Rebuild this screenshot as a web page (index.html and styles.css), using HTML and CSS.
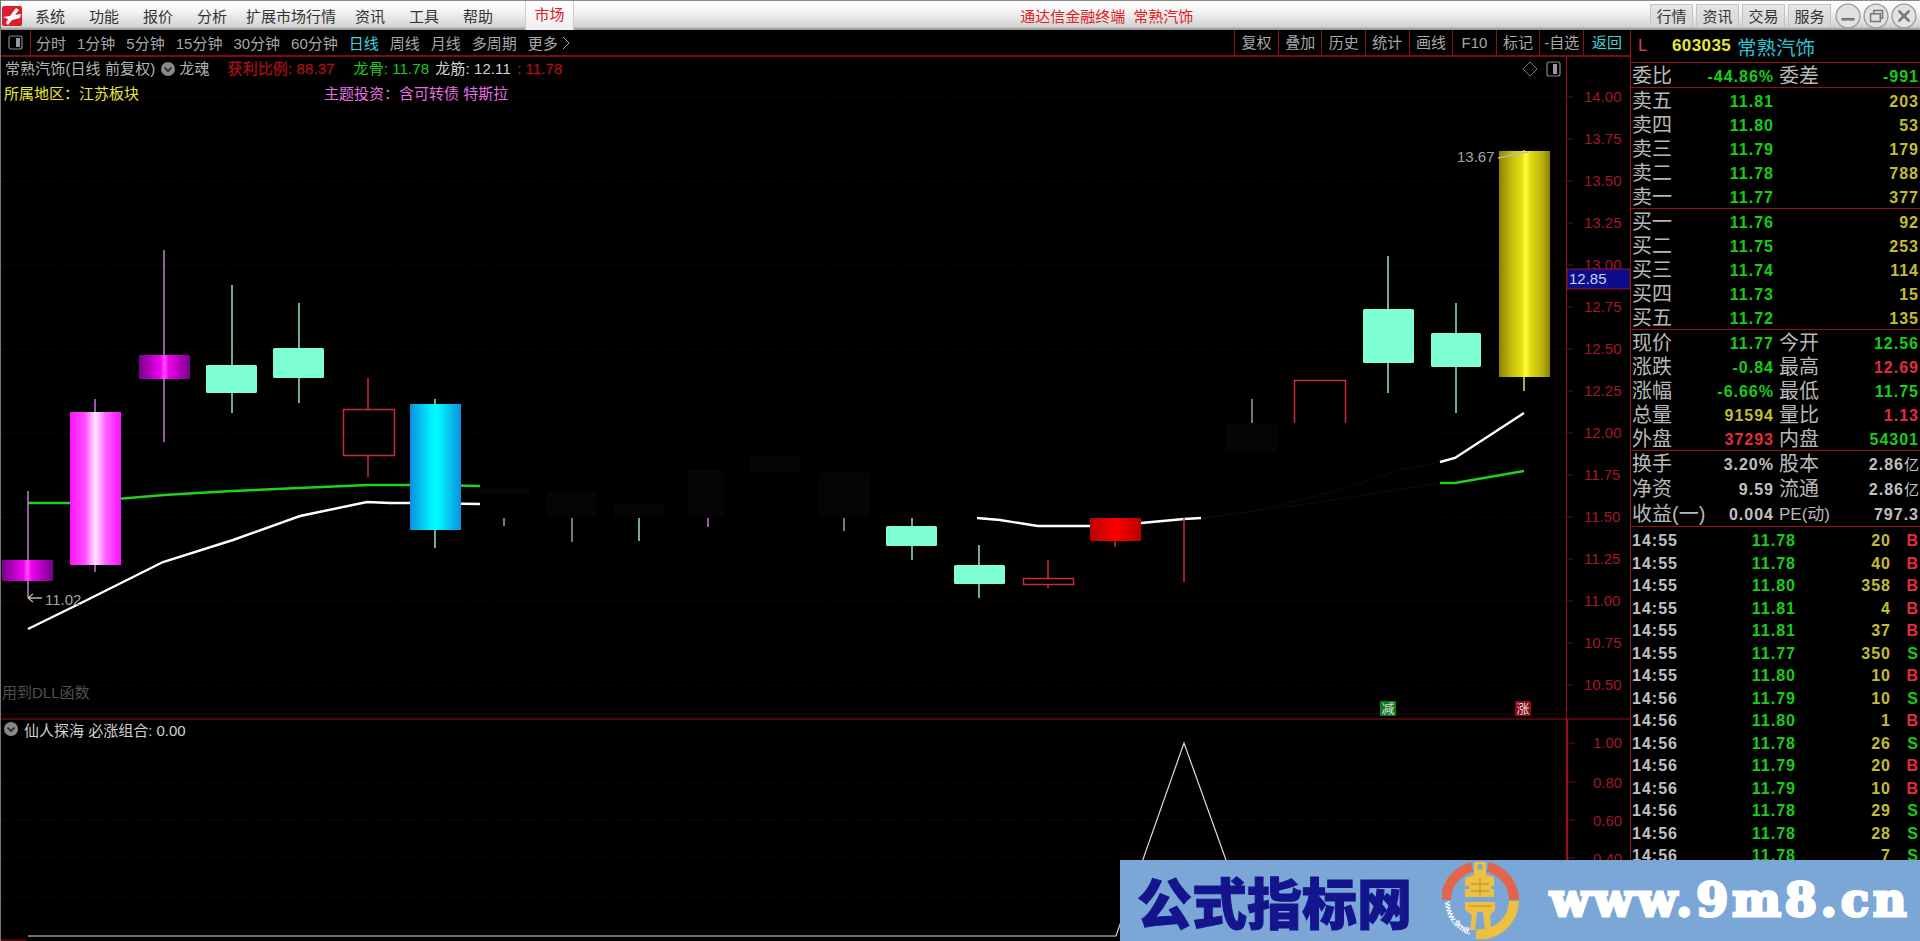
FILE: index.html
```html
<!DOCTYPE html>
<html lang="zh">
<head>
<meta charset="utf-8">
<title>通达信金融终端 常熟汽饰</title>
<link rel="stylesheet" href="styles.css">
</head>
<body>
<div class="app">
  <header class="titlebar">
    <svg class="app-logo" viewBox="0 0 20 20"><rect width="20" height="20" rx="2" fill="#d8202a"/><path d="M1 11 L8 10 L14 2 L17 4 L13 9 L19 8 L18 12 L10 14 L6 19 L4 17 L6 13 Z" fill="#fff"/></svg>
    <nav class="menu">
      <span>系统</span><span>功能</span><span>报价</span><span>分析</span><span class="menu-wide">扩展市场行情</span><span>资讯</span><span>工具</span><span>帮助</span>
    </nav>
    <span class="market-tab">市场</span>
    <div class="title-text">通达信金融终端 常熟汽饰</div>
    <div class="title-actions">
      <span class="title-btn">行情</span><span class="title-btn">资讯</span><span class="title-btn">交易</span><span class="title-btn">服务</span>
    </div>
    <div class="win-controls">
      <svg class="win-btn" viewBox="0 0 24 24"><circle cx="12" cy="12" r="11"/><path d="M6 15h12" class="win-glyph"/></svg>
      <svg class="win-btn" viewBox="0 0 24 24"><circle cx="12" cy="12" r="11"/><path d="M7 10h9v7H7z M10 10V7h8v7h-2" class="win-glyph thin"/></svg>
      <svg class="win-btn" viewBox="0 0 24 24"><circle cx="12" cy="12" r="11"/><path d="M7 7l10 10M17 7L7 17" class="win-glyph"/></svg>
    </div>
  </header>

  <div class="workspace">
    <section class="left">
      <div class="toolbar">
        <div class="tool-icon"><svg viewBox="0 0 15 15" class="pane-icon"><rect x="1" y="1" width="13" height="13" rx="2"/><rect x="8" y="3" width="4" height="9" class="pane-fill"/></svg></div>
        <div class="periods">
          <span>分时</span><span>1分钟</span><span>5分钟</span><span>15分钟</span><span>30分钟</span><span>60分钟</span><span class="active">日线</span><span>周线</span><span>月线</span><span>多周期</span><span class="more">更多 <svg viewBox="0 0 8 14" class="chev"><path d="M1 1l6 6-6 6"/></svg></span>
        </div>
        <div class="tools">
          <span>复权</span><span>叠加</span><span>历史</span><span>统计</span><span>画线</span><span>F10</span><span>标记</span><span>-自选</span><span class="active last">返回</span>
        </div>
      </div>

      <div class="chart">
        <svg class="chart-svg" viewBox="0 57 1630 884">
          <defs>
            <linearGradient id="gMag"><stop offset="0" stop-color="#76008a"/><stop offset=".42" stop-color="#f000f0"/><stop offset=".5" stop-color="#ff50ff"/><stop offset=".58" stop-color="#f000f0"/><stop offset="1" stop-color="#76008a"/></linearGradient>
            <linearGradient id="gPink"><stop offset="0" stop-color="#ff10ff"/><stop offset=".3" stop-color="#ff50ff"/><stop offset=".5" stop-color="#ffe8ff"/><stop offset=".7" stop-color="#ff60ff"/><stop offset="1" stop-color="#ff10ff"/></linearGradient>
            <linearGradient id="gBlue"><stop offset="0" stop-color="#0a90e0"/><stop offset=".45" stop-color="#00f8ff"/><stop offset=".55" stop-color="#00f8ff"/><stop offset="1" stop-color="#0a90e0"/></linearGradient>
            <linearGradient id="gRed"><stop offset="0" stop-color="#b80000"/><stop offset=".5" stop-color="#ff0000"/><stop offset="1" stop-color="#b80000"/></linearGradient>
            <linearGradient id="gYel"><stop offset="0" stop-color="#8a8200"/><stop offset=".25" stop-color="#c8c010"/><stop offset=".45" stop-color="#e4e010"/><stop offset=".52" stop-color="#ffff40"/><stop offset=".62" stop-color="#e0dc10"/><stop offset=".85" stop-color="#b8b010"/><stop offset="1" stop-color="#8a8200"/></linearGradient>
          </defs>

          <!-- grid -->
          <g class="grid">
            <path d="M1 97H1566M1 181H1566M1 265H1566M1 349H1566M1 433H1566M1 517H1566M1 601H1566M90 685H1566"/>
            <path d="M1 782H1566M1 820H1566M1 858H1566M1 898H1566"/>
          </g>

          <!-- axis -->
          <path class="frame" d="M1566.5 57V719"/>
          <path class="frame heavy" d="M1567 719V941"/>
          <path class="frame" d="M0 719H1630"/>
          <path class="frame faint" d="M0 714H1566"/>
          <path class="frame" d="M0 940H26"/>
          <g class="ticks">
            <path d="M1566 97h7M1566 139h7M1566 181h7M1566 223h7M1566 265h7M1566 307h7M1566 349h7M1566 391h7M1566 433h7M1566 475h7M1566 517h7M1566 559h7M1566 601h7M1566 643h7M1566 685h7"/>
            <path d="M1568 743h7M1568 782h7M1568 820h7M1568 858h7"/>
          </g>
          <g class="axis-label">
            <text x="1584" y="102">14.00</text><text x="1584" y="144">13.75</text><text x="1584" y="186">13.50</text><text x="1584" y="228">13.25</text><text x="1584" y="270">13.00</text><text x="1584" y="354">12.50</text><text x="1584" y="396">12.25</text><text x="1584" y="438">12.00</text><text x="1584" y="480">11.75</text><text x="1584" y="522">11.50</text><text x="1584" y="564">11.25</text><text x="1584" y="606">11.00</text><text x="1584" y="648">10.75</text><text x="1584" y="690">10.50</text>
            <text x="1584" y="312">12.75</text>
            <text x="1593" y="748">1.00</text><text x="1593" y="788">0.80</text><text x="1593" y="826">0.60</text><text x="1593" y="864">0.40</text>
          </g>
          <rect x="1567" y="269" width="63" height="20" class="cursor-box"/>
          <text x="1569" y="284" class="cursor-text">12.85</text>

          <!-- moving averages -->
          <polyline class="ma-green" points="28,503 70,503 164,495 232,491 299,488 368,485 435,485 480,486"/>
          <polyline class="ma-white" points="28,629 83,602 163,562 233,540 300,516 367,502 390,503 410,503 480,504"/>

          <!-- candles, left group -->
          <path class="wick-mag" d="M28 491V598"/><rect x="2" y="560" width="51" height="21" fill="url(#gMag)"/>
          <path class="wick-mag" d="M95 399V572"/><rect x="70" y="412" width="51" height="153" fill="url(#gPink)"/>
          <path class="wick-mag" d="M164 250V442"/><rect x="139" y="355" width="51" height="24" fill="url(#gMag)"/>
          <path class="wick-aqua" d="M232 285V413"/><rect x="206" y="365" width="51" height="28" rx="1.5" class="aqua"/>
          <path class="wick-aqua" d="M299 303V403"/><rect x="273" y="348" width="51" height="30" rx="1.5" class="aqua"/>
          <path class="wick-red" d="M368 378V409M368 455V477"/><rect x="343.5" y="409.5" width="51" height="46" class="hollow"/>
          <path class="wick-aqua" d="M435 399V548"/><rect x="410" y="404" width="51" height="126" fill="url(#gBlue)"/>
          <path class="wick-grey" d="M28 598h14M28 598l5-4M28 598l5 4"/>
          <text x="45" y="605" class="note">11.02</text>

          <!-- masked middle region -->
          <rect x="480" y="423" width="960" height="95" fill="#000"/>
          <g class="ghost">
            <rect x="480" y="488" width="50" height="6"/><rect x="547" y="492" width="49" height="25"/><rect x="614" y="503" width="50" height="14"/><rect x="688" y="470" width="36" height="47"/><rect x="750" y="455" width="50" height="18"/><rect x="819" y="473" width="51" height="44"/><rect x="1226" y="423" width="51" height="29"/>
          </g>
          <polyline class="ghost-line" points="1201,518 1250,512 1340,490 1400,470 1440,462"/>
          <polyline class="ghost-line" points="1201,518 1300,505 1440,483"/>

          <!-- wick stubs under mask -->
          <path class="wick-grey" d="M504 518V526M572 518V542M844 518V531"/>
          <path class="wick-aqua" d="M639 518V541"/>
          <path class="wick-mag" d="M708 518V527"/>
          <path class="wick-aqua" d="M912 518V560"/><rect x="886" y="526" width="51" height="20" rx="1.5" class="aqua"/>
          <path class="wick-aqua" d="M979 545V598"/><rect x="954" y="565" width="51" height="19" rx="1.5" class="aqua"/>
          <polyline class="ma-white" points="977,518 1000,520 1019,523 1038,526 1090,526"/>
          <polyline class="ma-white" points="1141,523 1184,519 1201,518"/>
          <path class="wick-red" d="M1115 541V547"/><rect x="1090" y="518" width="51" height="23" fill="url(#gRed)"/>
          <path class="wick-red" d="M1184 518V582"/>
          <path class="wick-red" d="M1048 560V578M1048 584V588"/><rect x="1023.5" y="578.5" width="50" height="6" class="hollow"/>

          <!-- right group -->
          <path class="wick-grey" d="M1252 399V423"/>
          <path class="hollow" d="M1294.5 423V380.5H1345.5V423"/>
          <path class="wick-aqua" d="M1388 256V393"/><rect x="1363" y="309" width="51" height="54" rx="1.5" class="aqua"/>
          <path class="wick-aqua" d="M1456 303V413"/><rect x="1431" y="333" width="50" height="34" rx="1.5" class="aqua"/>
          <polyline class="ma-white" points="1440,462 1455,458 1524,413"/>
          <polyline class="ma-green" points="1440,483 1455,483 1524,471"/>
          <path class="wick-yel" d="M1524 150V391"/><rect x="1499" y="151" width="51" height="226" fill="url(#gYel)"/>
          <path class="wick-grey" d="M1498 158L1528 152"/>
          <text x="1457" y="162" class="note">13.67</text>
          <text x="2" y="698" class="dll">用到DLL函数</text>

          <!-- top-right pane icons -->
          <path class="diamond" d="M1530 62l7 7-7 7-7-7z"/>
          <g class="pane-icon"><rect x="1547" y="62" width="13" height="14" rx="2"/><rect x="1553" y="64" width="4" height="10" class="pane-fill"/></g>

          <!-- lower indicator -->
          <polyline class="signal" points="28,936 1116,936 1184,743 1226,860"/>
        </svg>

        <div class="legend">
          <div class="legend-row">
            <span class="c-grey">常熟汽饰(日线 前复权)</span>
            <svg class="chevron-dot first" viewBox="0 0 14 14"><circle cx="7" cy="7" r="7"/><path d="M3.5 5.5L7 9l3.5-3.5"/></svg>
            <span class="c-grey name">龙魂</span>
            <span class="c-dred g1">获利比例: 88.37</span>
            <span class="c-green g2">龙骨: 11.78</span>
            <span class="c-white g3">龙筋: 12.11</span>
            <span class="c-dred g3">: 11.78</span>
          </div>
          <div class="legend-row second">
            <span class="c-yellow region">所属地区：江苏板块</span>
            <span class="c-pink">主题投资：含可转债 特斯拉</span>
          </div>
        </div>

        <div class="legend-low">
          <svg class="chevron-dot" viewBox="0 0 14 14"><circle cx="7" cy="7" r="7"/><path d="M3.5 5.5L7 9l3.5-3.5"/></svg>
          <span>仙人探海 必涨组合: 0.00</span>
        </div>

        <span class="badge badge-green">减</span>
        <span class="badge badge-red">涨</span>
      </div>
    </section>

    <aside class="panel">
      <div class="stock-head"><span class="flag">L</span><span class="code">603035</span><span class="stock-name">常熟汽饰</span></div>

      <div class="block">
        <div class="q-row"><span class="lb">委比</span><span class="g">-44.86%</span><span class="lb2">委差</span><span class="g">-991</span></div>
      </div>
      <div class="block">
        <div class="q-row"><span class="lb">卖五</span><span class="g">11.81</span><span></span><span class="y">203</span></div>
        <div class="q-row"><span class="lb">卖四</span><span class="g">11.80</span><span></span><span class="y">53</span></div>
        <div class="q-row"><span class="lb">卖三</span><span class="g">11.79</span><span></span><span class="y">179</span></div>
        <div class="q-row"><span class="lb">卖二</span><span class="g">11.78</span><span></span><span class="y">788</span></div>
        <div class="q-row"><span class="lb">卖一</span><span class="g">11.77</span><span></span><span class="y">377</span></div>
      </div>
      <div class="block">
        <div class="q-row"><span class="lb">买一</span><span class="g">11.76</span><span></span><span class="y">92</span></div>
        <div class="q-row"><span class="lb">买二</span><span class="g">11.75</span><span></span><span class="y">253</span></div>
        <div class="q-row"><span class="lb">买三</span><span class="g">11.74</span><span></span><span class="y">114</span></div>
        <div class="q-row"><span class="lb">买四</span><span class="g">11.73</span><span></span><span class="y">15</span></div>
        <div class="q-row"><span class="lb">买五</span><span class="g">11.72</span><span></span><span class="y">135</span></div>
      </div>
      <div class="block">
        <div class="q-row"><span class="lb">现价</span><span class="g">11.77</span><span class="lb2">今开</span><span class="g">12.56</span></div>
        <div class="q-row"><span class="lb">涨跌</span><span class="g">-0.84</span><span class="lb2">最高</span><span class="r">12.69</span></div>
        <div class="q-row"><span class="lb">涨幅</span><span class="g">-6.66%</span><span class="lb2">最低</span><span class="g">11.75</span></div>
        <div class="q-row"><span class="lb">总量</span><span class="y">91594</span><span class="lb2">量比</span><span class="r">1.13</span></div>
        <div class="q-row"><span class="lb">外盘</span><span class="r">37293</span><span class="lb2">内盘</span><span class="g">54301</span></div>
      </div>
      <div class="block block-stats">
        <div class="q-row"><span class="lb">换手</span><span class="w">3.20%</span><span class="lb2">股本</span><span class="w">2.86<small>亿</small></span></div>
        <div class="q-row"><span class="lb">净资</span><span class="w">9.59</span><span class="lb2">流通</span><span class="w">2.86<small>亿</small></span></div>
        <div class="q-row"><span class="lb">收益(一)</span><span class="w">0.004</span><span class="lb2 pe">PE(动)</span><span class="w">797.3</span></div>
      </div>
      <div class="ticks-list">
        <div class="t-row"><span class="w">14:55</span><span class="g">11.78</span><span class="y">20</span><span class="r">B</span></div>
        <div class="t-row"><span class="w">14:55</span><span class="g">11.78</span><span class="y">40</span><span class="r">B</span></div>
        <div class="t-row"><span class="w">14:55</span><span class="g">11.80</span><span class="y">358</span><span class="r">B</span></div>
        <div class="t-row"><span class="w">14:55</span><span class="g">11.81</span><span class="y">4</span><span class="r">B</span></div>
        <div class="t-row"><span class="w">14:55</span><span class="g">11.81</span><span class="y">37</span><span class="r">B</span></div>
        <div class="t-row"><span class="w">14:55</span><span class="g">11.77</span><span class="y">350</span><span class="g">S</span></div>
        <div class="t-row"><span class="w">14:55</span><span class="g">11.80</span><span class="y">10</span><span class="r">B</span></div>
        <div class="t-row"><span class="w">14:56</span><span class="g">11.79</span><span class="y">10</span><span class="g">S</span></div>
        <div class="t-row"><span class="w">14:56</span><span class="g">11.80</span><span class="y">1</span><span class="r">B</span></div>
        <div class="t-row"><span class="w">14:56</span><span class="g">11.78</span><span class="y">26</span><span class="g">S</span></div>
        <div class="t-row"><span class="w">14:56</span><span class="g">11.79</span><span class="y">20</span><span class="r">B</span></div>
        <div class="t-row"><span class="w">14:56</span><span class="g">11.79</span><span class="y">10</span><span class="r">B</span></div>
        <div class="t-row"><span class="w">14:56</span><span class="g">11.78</span><span class="y">29</span><span class="g">S</span></div>
        <div class="t-row"><span class="w">14:56</span><span class="g">11.78</span><span class="y">28</span><span class="g">S</span></div>
        <div class="t-row"><span class="w">14:56</span><span class="g">11.78</span><span class="y">7</span><span class="g">S</span></div>
      </div>
    </aside>
  </div>

  <div class="watermark">
    <span class="wm-cn">公式指标网</span>
    <svg class="wm-logo" viewBox="0 0 78 78">
      <path class="arc-top" d="M4 38A34 34 0 0 1 30 5M46 5A34 34 0 0 1 72 38"/>
      <path class="arc-bot" d="M72 39A34 34 0 0 1 34 72"/>
      <path class="figure" d="M32 0H44V13L52 15V35H23V16L32 13Z"/>
      <path class="figure" d="M23 40H53V48L48 53L49 68H43L41 50H35L33 68H28L30 53L23 48Z"/>
      <circle cx="38" cy="5" r="2.8" class="hole"/>
      <path class="cut" d="M38 16V34M29 22H47M29 29H47M27 44H49"/>
      <path class="hole" d="M23 24h4v3h-4zM49 24h4v3h-4z"/>
      <path id="wmArc" d="M3 40A36 36 0 0 0 28 73" fill="none"/>
      <text class="wm-small"><textPath href="#wmArc">www.9m8.cn</textPath></text>
    </svg>
    <span class="wm-url">www.9m8.cn</span>
  </div>
</div>
</body>
</html>
```

FILE: styles.css
```css
* { box-sizing: border-box; }
html, body { margin: 0; padding: 0; background: #000; }
body {
  width: 1920px;
  height: 941px;
  overflow: hidden;
  font-family: "Liberation Sans", "Noto Sans CJK SC", sans-serif;
  font-size: 15px;
}
.app { position: relative; width: 1920px; height: 941px; display: flex; flex-direction: column; background: #000; overflow: hidden; border-left: 1px solid #777; }

/* title bar */
.titlebar {
  height: 30px; flex: none; display: flex; align-items: center; color: #222;
  background: linear-gradient(#fff 0, #f4f4f4 35%, #d4d4d4 88%, #8a8a8a 100%);
  border-top: 1px solid #8a8a8a;
}
.app-logo { width: 20px; height: 20px; margin-left: 1px; flex: none; }
.menu { display: flex; gap: 24px; margin-left: 13px; color: #333; }
.menu-wide { margin: 0 -5px; }
.market-tab { margin-left: 32px; width: 49px; height: 29px; line-height: 28px; text-align: center; color: #d8202a; background: linear-gradient(#fff, #eee); border-left: 1px solid #ccc; border-right: 1px solid #ccc; }
.title-text { margin-left: 446px; width: 175px; color: #e01c24; white-space: nowrap; word-spacing: 4px; }
.title-actions { margin-left: 455px; display: flex; gap: 3px; }
.title-btn { width: 43px; height: 24px; line-height: 23px; text-align: center; color: #333; background: linear-gradient(#e6e6e6, #d4d4d4); border: 1px solid #c4c4c4; }
.win-controls { margin-left: 4px; display: flex; gap: 2px; }
.win-btn { width: 26px; height: 26px; }
.win-btn circle { fill: #e2e2e2; stroke: #9a9a9a; stroke-width: 1.2; }
.win-glyph { fill: none; stroke: #777; stroke-width: 2.4; }
.win-glyph.thin { stroke-width: 1.4; }

/* layout */
.workspace { flex: 1; display: flex; min-height: 0; }
.left { width: 1629px; flex: none; display: flex; flex-direction: column; }
.toolbar { height: 27px; flex: none; display: flex; align-items: stretch; border-bottom: 2px solid #7d0a16; color: #a8a8a8; }
.tool-icon { width: 30px; flex: none; display: flex; align-items: center; justify-content: center; border-right: 1px solid #8c1018; }
.pane-icon { width: 15px; height: 15px; }
.pane-icon rect { fill: none; stroke: #888; stroke-width: 1.2; }
.pane-icon rect.pane-fill { fill: #999; stroke: none; }
.periods { display: flex; align-items: center; gap: 11px; padding-left: 5px; white-space: nowrap; }
.periods .active, .tools .active { color: #3cd8d8; }
.more { display: inline-flex; align-items: center; gap: 4px; }
.chev { width: 8px; height: 14px; fill: none; stroke: #a8a8a8; stroke-width: 1; }
.tools { margin-left: auto; display: flex; }
.tools span { width: 43.6px; text-align: center; line-height: 25px; border-left: 1px solid #8c1018; }
.tools .last { width: 47px; }

/* chart */
.chart { position: relative; flex: 1; min-height: 0; }
.chart-svg { display: block; width: 1630px; height: 884px; margin-left: -1px; }
.grid path { fill: none; stroke: #3c080c; stroke-width: 1; stroke-dasharray: 1 2; }
.frame { fill: none; stroke: #960f1a; stroke-width: 1; }
.frame.heavy { stroke-width: 2.4; }
.frame.faint { stroke: #2a0508; }
.ticks path { stroke: #6a0c14; stroke-width: 1; }
.axis-label text { fill: #a3182a; font-size: 15px; }
.cursor-box { fill: #0c0c8c; stroke: #a01020; stroke-width: 1; }
.cursor-text { fill: #c8d0f0; font-size: 15px; }
.ma-green { fill: none; stroke: #1ed21e; stroke-width: 2.4; }
.ma-white { fill: none; stroke: #fff; stroke-width: 2.4; }
.wick-mag { stroke: #c878d8; stroke-width: 1.5; fill: none; }
.wick-aqua { stroke: #98e8b8; stroke-width: 1.5; fill: none; }
.wick-red { stroke: #c82c34; stroke-width: 1.5; fill: none; }
.wick-grey { stroke: #b8b8b0; stroke-width: 1.3; fill: none; }
.wick-yel { stroke: #ecec30; stroke-width: 1.5; fill: none; }
.aqua { fill: #7fffd4; }
.hollow { fill: none; stroke: #c82c34; stroke-width: 1.5; }
.note { fill: #a4a4a4; font-size: 15px; }
.dll { fill: #505050; font-size: 15px; }
.ghost rect { fill: #050505; }
.ghost-line { fill: none; stroke: #0c0c0c; stroke-width: 1; }
.diamond { fill: none; stroke: #777; stroke-width: 1; }
.signal { fill: none; stroke: #dcdcdc; stroke-width: 1.2; }

.legend { position: absolute; top: 0; left: 4px; line-height: 23px; white-space: nowrap; }
.legend-row { display: flex; align-items: center; height: 23px; letter-spacing: .1px; }
.legend-row.second { margin-top: 2px; margin-left: -1px; letter-spacing: 0; }
.chevron-dot { width: 14px; height: 14px; flex: none; }
.chevron-dot circle { fill: #888; }
.chevron-dot path { fill: none; stroke: #222; stroke-width: 1.6; }
.chevron-dot.first { margin-left: 6px; }
.name { margin-left: 4px; }
.g1 { margin-left: 18px; }
.g2 { margin-left: 19px; }
.g3 { margin-left: 6px; }
.region { width: 320px; }
.c-grey { color: #b4b4b4; }
.c-dred { color: #a81016; -webkit-text-stroke: .3px #a81016; }
.c-green { color: #1ccc1c; }
.c-white { color: #d4d4d4; }
.c-yellow { color: #e8e838; }
.c-pink { color: #e070e0; }

.legend-low { position: absolute; top: 662px; left: 3px; display: flex; align-items: center; gap: 6px; height: 20px; color: #d0d0d0; white-space: nowrap; }
.badge { position: absolute; top: 644px; width: 16px; height: 15px; line-height: 15px; text-align: center; font-size: 13px; color: #ddd; }
.badge-green { left: 1379px; background: #0e7a18; }
.badge-red { left: 1514px; background: #8c0a14; }

/* right panel */
.panel { flex: 1; min-width: 0; border-left: 1px solid #96101a; overflow: hidden; }
.stock-head { height: 33px; display: flex; align-items: center; border-bottom: 1px solid #96101a; font-weight: bold; }
.flag { margin-left: 7px; width: 34px; font-size: 17px; font-weight: normal; color: #e0405a; }
.code { color: #e8e838; font-size: 17px; letter-spacing: .4px; width: 65px; }
.stock-name { color: #2cc0d0; font-size: 19.5px; font-weight: normal; }
.block { border-bottom: 1px solid #96101a; }
.block:nth-of-type(2) { height: 25px; }
.q-row { display: grid; grid-template-columns: 42px 101px 46px 99px; height: 24px; line-height: 27px; white-space: nowrap; font-size: 16px; font-weight: bold; letter-spacing: 1px; }
.block-stats .q-row { height: 25px; }
.q-row > span { text-align: right; }
.q-row > .lb, .q-row > .lb2 { text-align: left; font-size: 20px; font-weight: normal; letter-spacing: 0; color: #b8b8b8; }
.lb { padding-left: 1px; }
.lb2 { padding-left: 5px; }
.q-row > .pe { font-size: 17px; }
small { font-size: 15px; font-weight: normal; letter-spacing: 0; }
.g { color: #18cc18; }
.y { color: #c4bc30; }
.r { color: #e42c40; }
.w { color: #c0c0c0; }
.ticks-list { padding-top: 3px; }
.t-row { display: grid; grid-template-columns: 46px 119px 95px 28px; height: 22.5px; line-height: 22px; font-size: 16px; font-weight: bold; letter-spacing: 1px; white-space: nowrap; }
.t-row > span:nth-child(1) { padding-left: 1px; }
.t-row > span:nth-child(2), .t-row > span:nth-child(3) { text-align: right; }
.t-row > span:nth-child(4) { text-align: right; }

/* watermark */
.watermark { position: absolute; left: 1119px; top: 860px; width: 800px; height: 81px; display: flex; align-items: center; background: #7ba7d7; padding-left: 17px; }
.wm-cn { width: 276px; font-family: "Noto Sans CJK SC", sans-serif; font-weight: 900; font-size: 55px; line-height: 81px; color: #14148c; white-space: nowrap; -webkit-text-stroke: 1px #14148c; }
.wm-logo { width: 78px; height: 78px; margin-left: 29px; flex: none; }
.arc-top { fill: none; stroke: #e0654a; stroke-width: 10; }
.arc-bot { fill: none; stroke: #eec040; stroke-width: 10; }
.figure { fill: #eec040; }
.hole { fill: #7ba7d7; }
.cut { fill: none; stroke: #c89a30; stroke-width: 1.5; }
.wm-small { fill: #fff; font-size: 9px; font-weight: bold; font-family: "Liberation Sans", sans-serif; }
.wm-url { margin-left: 30px; font-family: "DejaVu Serif", serif; font-weight: bold; font-size: 46px; line-height: 81px; color: #fff; letter-spacing: 4px; white-space: nowrap; -webkit-text-stroke: 3px #fff; }
```
